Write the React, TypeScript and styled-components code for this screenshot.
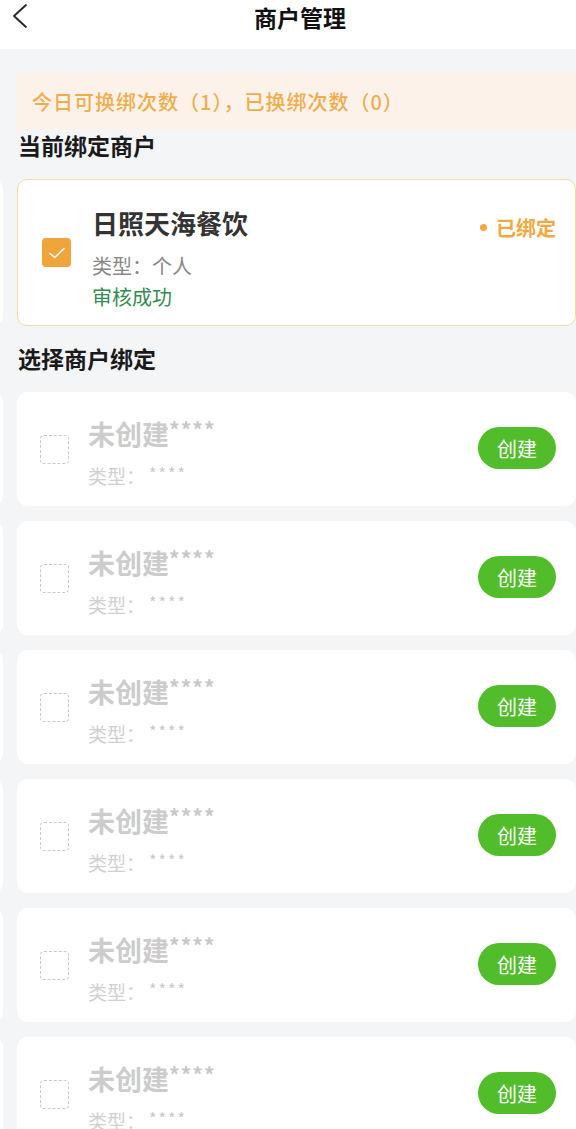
import styled, { createGlobalStyle } from 'styled-components';

const GlobalStyle = createGlobalStyle`
  html, body {
    margin: 0;
    padding: 0;
    background: #f4f5f7;
    font-family: 'Noto Sans CJK SC', 'Noto Sans', sans-serif;
  }
  * { box-sizing: border-box; }
`;

const unbound = [1, 2, 3, 4, 5, 6];

export default function App() {
  return (
    <StPage>
      <GlobalStyle />
      <StHeader>
        <StBack>
          <svg width="18" height="26" viewBox="0 0 18 26" fill="none">
            <path d="M15 2 L3 13 L15 24" stroke="#222" strokeWidth="1.8" strokeLinecap="round" strokeLinejoin="round" />
          </svg>
        </StBack>
        <StTitle>商户管理</StTitle>
      </StHeader>

      <StBody>
        <StNotice>今日可换绑次数（1），已换绑次数（0）</StNotice>

        <StSection>当前绑定商户</StSection>
        <StRow>
          <StGhost />
          <StCard $bound>
            <StCheck $checked>
              <svg width="18" height="14" viewBox="0 0 18 14" fill="none">
                <path d="M2 7.5 L6.8 11.5 L16 2.5" stroke="#fff" strokeWidth="1.6" strokeLinecap="round" strokeLinejoin="round" />
              </svg>
            </StCheck>
            <StInfo>
              <StName>日照天海餐饮</StName>
              <StType>类型：个人</StType>
              <StStatus>审核成功</StStatus>
            </StInfo>
            <StBadge>已绑定</StBadge>
          </StCard>
        </StRow>

        <StSection $second>选择商户绑定</StSection>
        <StList>
          {unbound.map((i) => (
            <StRow key={i}>
              <StGhost />
              <StCard>
                <StCheck />
                <StInfo $muted>
                  <StName $muted>
                    未创建<StStars>****</StStars>
                  </StName>
                  <StType $muted>
                    类型：<StSmallStars>****</StSmallStars>
                  </StType>
                </StInfo>
                <StCreateBtn>创建</StCreateBtn>
              </StCard>
            </StRow>
          ))}
        </StList>
      </StBody>
    </StPage>
  );
}

const StPage = styled.div`
  width: 576px;
  min-height: 1129px;
  overflow: hidden;
  background: #f4f5f7;
`;

const StHeader = styled.div`
  height: 49px;
  background: #ffffff;
  display: flex;
  align-items: center;
  justify-content: center;
  position: relative;
`;

const StBack = styled.div`
  position: absolute;
  left: 11px;
  top: 3px;
`;

const StTitle = styled.div`
  font-size: 23px;
  font-weight: 700;
  color: #111;
  margin-left: 24px;
  margin-top: -15px;
`;

const StBody = styled.div`
  padding: 24px 0 0 17px;
`;

const StNotice = styled.div`
  height: 57px;
  background: #fdf2ea;
  color: #f0ad4c;
  font-size: 20px;
  letter-spacing: 1px;
  font-weight: 500;
  display: flex;
  align-items: center;
  padding-left: 15px;
`;

const StSection = styled.div<{ $second?: boolean }>`
  font-size: 23px;
  font-weight: 700;
  color: #1a1a1a;
  line-height: 30px;
  margin-top: ${(p) => (p.$second ? '17px' : '0')};
  margin-bottom: 19px;
  margin-left: 1px;
`;

const StList = styled.div`
  display: flex;
  flex-direction: column;
  gap: 15px;
`;

const StRow = styled.div`
  display: flex;
  gap: 14px;
  margin-left: -17px;
`;

const StGhost = styled.div`
  flex: none;
  width: 120px;
  margin-left: -117px;
  background: #ffffff;
  border-radius: 10px;
`;

const StCard = styled.div<{ $bound?: boolean }>`
  flex: none;
  width: 559px;
  height: ${(p) => (p.$bound ? '147px' : '114px')};
  background: #ffffff;
  border: 1px solid ${(p) => (p.$bound ? '#f1dca8' : '#ffffff')};
  border-radius: 10px;
  display: flex;
  align-items: center;
  padding: 0 19px 0 ${(p) => (p.$bound ? '24px' : '22px')};
`;

const StCheck = styled.div<{ $checked?: boolean }>`
  flex: none;
  width: 29px;
  height: 29px;
  border-radius: 4px;
  display: flex;
  align-items: center;
  justify-content: center;
  background: ${(p) => (p.$checked ? '#f0a53a' : 'transparent')};
  border: ${(p) => (p.$checked ? 'none' : '1.5px dashed #c9c9c9')};
`;

const StInfo = styled.div<{ $muted?: boolean }>`
  flex: 1;
  display: flex;
  flex-direction: column;
  margin-left: ${(p) => (p.$muted ? '19px' : '21px')};
  margin-top: ${(p) => (p.$muted ? '4px' : '12px')};
`;

const StName = styled.div<{ $muted?: boolean }>`
  font-size: ${(p) => (p.$muted ? '27px' : '26px')};
  font-weight: 700;
  line-height: 36px;
  color: ${(p) => (p.$muted ? '#cccccc' : '#333333')};
  margin-bottom: ${(p) => (p.$muted ? '6px' : '10px')};
`;

const StStars = styled.span`
  font-size: 21px;
  vertical-align: 7px;
  color: #c8c8c8;
  letter-spacing: 1px;
`;

const StType = styled.div<{ $muted?: boolean }>`
  font-size: ${(p) => (p.$muted ? '19px' : '20px')};
  line-height: 30px;
  color: ${(p) => (p.$muted ? '#d0d0d0' : '#888888')};
`;

const StSmallStars = styled.span`
  font-size: 16px;
  color: #c8c8c8;
  vertical-align: 4px;
  letter-spacing: 2px;
  margin-left: 4px;
`;

const StStatus = styled.div`
  font-size: 20px;
  line-height: 32px;
  color: #348a54;
`;

const StBadge = styled.div`
  align-self: flex-start;
  margin-top: 33px;
  font-size: 20px;
  font-weight: 700;
  color: #f0a940;
  display: flex;
  align-items: center;
  gap: 9px;

  &::before {
    content: '';
    width: 7px;
    height: 7px;
    border-radius: 50%;
    background: #f0a940;
  }
`;

const StCreateBtn = styled.button`
  flex: none;
  width: 78px;
  height: 42px;
  border: none;
  border-radius: 21px;
  background: #52bd2a;
  color: #ffffff;
  font-family: inherit;
  font-size: 20px;
  padding: 0;
  margin-top: -2px;
`;
